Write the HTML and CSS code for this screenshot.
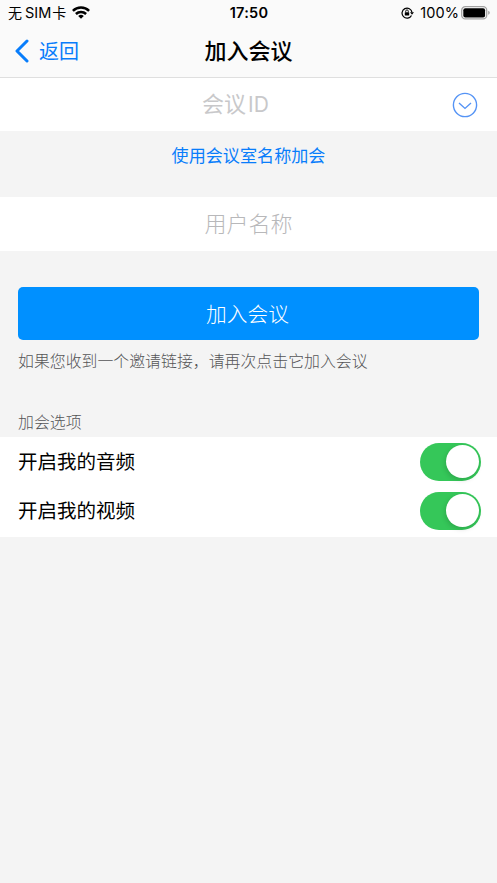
FILE: index.html
```
<!DOCTYPE html>
<html lang="zh-CN">
<head>
<meta charset="utf-8">
<title>加入会议</title>
<link rel="stylesheet" href="styles.css">
</head>
<body>
<header class="top">
  <div class="status">
    <div class="carrier"><span>无</span><span class="sim">SIM</span><span>卡</span>
      <svg class="wifi" width="18" height="13" viewBox="0 0 18 13" fill="none" stroke="#000" stroke-width="2.5"><path d="M.9 4.9a11.6 11.6 0 0 1 16.2 0M3.9 8a7.3 7.3 0 0 1 10.2 0"/><path d="M9 12.8 6.2 10a4 4 0 0 1 5.6 0z" fill="#000" stroke="none"/></svg>
    </div>
    <div class="time">17:50</div>
    <div class="power">
      <svg class="lock" width="13" height="12" viewBox="0 0 13 12" fill="none" stroke="#000"><path d="M10.5 8.4A5 5 0 1 1 11 5.4" stroke-width="1.2"/><path d="M9 5.2h4L11 7.7z" fill="#000" stroke="none"/><rect x="3.8" y="5.2" width="4.4" height="3.3" rx=".5" fill="#000" stroke="none"/><path d="M4.7 5.3V4.2a1.3 1.3 0 0 1 2.6 0v1.1" stroke-width=".9"/></svg>
      <span class="percent">100%</span>
      <svg class="battery" width="29" height="14" viewBox="0 0 29 14"><rect x=".7" y=".7" width="25" height="12.2" rx="3.6" fill="#fff" stroke="#a2a2a2" stroke-width="1.3"/><rect x="2.3" y="2.2" width="21.8" height="9.2" rx="2" /><path d="M27.2 4.8q1.6.6 1.6 2t-1.6 2z" fill="#a2a2a2"/></svg>
    </div>
  </div>
  <nav class="nav">
    <a class="back"><svg width="14" height="24" viewBox="0 0 14 24" fill="none" stroke="#087dfb" stroke-width="3" stroke-linecap="round" stroke-linejoin="round"><path d="M12 2 2 12l10 10"/></svg><span>返回</span></a>
    <h1>加入会议</h1>
  </nav>
</header>
<main>
  <div class="field id"><span class="placeholder">会议<span class="latin">ID</span></span>
    <svg class="expand" width="26" height="26" viewBox="0 0 26 26" fill="none" stroke="#5493f5" stroke-width="1.4"><circle cx="13" cy="13" r="11.6"/><path d="m7 11 6 5.4 6-5.4"/></svg>
  </div>
  <a class="link">使用会议室名称加会</a>
  <div class="field user"><span class="placeholder">用户名称</span></div>
  <button class="join">加入会议</button>
  <p class="hint">如果您收到一个邀请链接，请再次点击它加入会议</p>
  <h2>加会选项</h2>
  <div class="options">
    <div class="option"><span>开启我的音频</span><span class="switch"></span></div>
    <div class="option"><span>开启我的视频</span><span class="switch"></span></div>
  </div>
</main>
</body>
</html>
```
FILE: styles.css
```
* { box-sizing: border-box; }
body {
  margin: 0;
  min-height: 883px;
  background: #f4f4f4;
  color: #000;
  font-family: Inter, "Noto Sans CJK SC", sans-serif;
}
svg { display: block; flex: none; }
.top {
  height: 78px;
  background: #fafafa;
  border-bottom: 1px solid #dfdfdf;
}
.status {
  display: grid;
  grid-template-columns: 1fr auto 1fr;
  align-items: center;
  height: 26px;
  padding: 0 7px 0 8px;
  font-size: 14.5px;
  line-height: 26px;
}
.carrier, .power { display: flex; align-items: center; }
.carrier { font-size: 14px; }
.sim { margin: 0 1px 0 3px; font-size: 14.5px; }
.wifi { margin: -1px 0 0 6px; }
.time { font-weight: 600; letter-spacing: .25px; }
.power { justify-content: flex-end; }
.percent { margin: 0 2px 0 6px; letter-spacing: .1px; }
.nav {
  display: grid;
  grid-template-columns: 1fr auto 1fr;
  align-items: center;
  height: 50px;
}
.back {
  display: flex;
  align-items: center;
  gap: 10px;
  padding-left: 15px;
  color: #087dfb;
  font-size: 20px;
  line-height: 48px;
}
.back span { padding-top: 2px; }
h1 { margin: 0; font-size: 22px; font-weight: 500; line-height: 50px; }
.field {
  display: grid;
  align-items: center;
  justify-items: center;
  background: #fff;
}
.placeholder {
  color: #b8b8ba;
  font-size: 22px;
  font-weight: 300;
  line-height: 53px;
}
.id {
  grid-template-columns: 1fr 26px;
  height: 53px;
  padding: 0 19px;
}
.id .placeholder { color: #c8c8ca; font-weight: 400; }
.latin { margin-left: 2px; font-size: 21px; }
.link {
  display: block;
  height: 66px;
  color: #087dfb;
  font-size: 17.1px;
  line-height: 50px;
  text-align: center;
}
.user { height: 54px; }
.join {
  display: block;
  width: 461px;
  height: 53px;
  margin: 36px 18px 0;
  padding: 0 2px 0 0;
  border: 0;
  border-radius: 5px;
  background: #0090ff;
  color: #fff;
  font: 300 20.7px/53px "Noto Sans CJK SC", sans-serif;
}
.hint {
  height: 42px;
  margin: 0 18px;
  color: #545457;
  font-size: 15.9px;
  font-weight: 300;
  line-height: 44px;
}
h2 {
  height: 55px;
  margin: 0;
  padding: 25px 18px 0;
  color: #545457;
  font-size: 15.9px;
  font-weight: 300;
  line-height: 32px;
}
.options { height: 100px; background: #fff; }
.option {
  display: flex;
  align-items: center;
  justify-content: space-between;
  height: 49px;
  padding: 0 16px 0 18px;
  font-size: 19.5px;
  line-height: 49px;
}
.option > span:first-child { padding-top: 2px; }
.switch {
  display: flex;
  justify-content: flex-end;
  width: 61px;
  height: 38px;
  padding: 2px;
  border-radius: 19px;
  background: #35c759;
}
.switch::before {
  content: "";
  width: 33px;
  height: 33px;
  border-radius: 50%;
  background: #fff;
  box-shadow: -1px 2px 5px rgb(0 0 0 / .15);
}
```
